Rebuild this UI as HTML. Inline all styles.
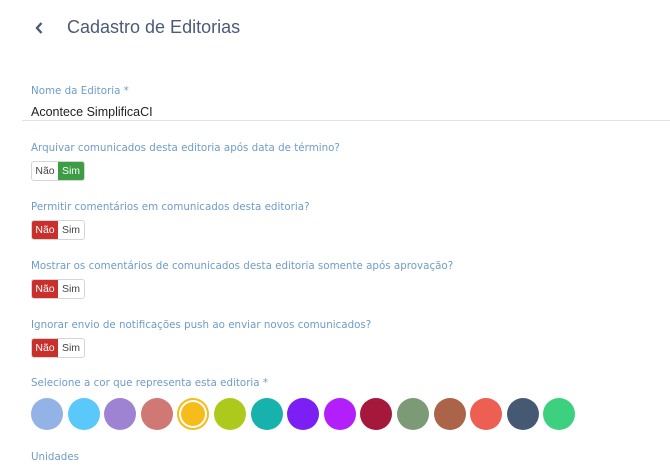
<!DOCTYPE html><html><head><style>
body{margin:0;width:670px;height:476px;background:#fff;font-family:"DejaVu Sans","Liberation Sans",sans-serif;position:relative;overflow:hidden}
.a{position:absolute;white-space:nowrap}
.t{left:67px;top:17px;font-size:18px;color:#4b5a78;font-family:"Liberation Sans",sans-serif}
.l{left:31px;font-size:10.3px;color:#6f9cc8}
.tg{position:absolute;left:31px;width:52px;height:18px;border:1px solid #d6d6d6;border-radius:3px;display:flex;font-family:"Liberation Sans",sans-serif;font-size:10.5px;overflow:hidden}
.tg span{flex:1;display:flex;align-items:center;justify-content:center;color:#444}
.tg .r{background:#c9302c;color:#fff}.tg .g{background:#3d9d44;color:#fff}
.c{position:absolute;top:398px;width:32px;height:32px;border-radius:50%}
</style></head><body>
<svg class="a" style="left:34px;top:21px" width="10" height="14" viewBox="0 0 10 14"><path d="M7.5 2 L3 7 L7.5 12" stroke="#4b5a78" stroke-width="2.4" fill="none"/></svg>
<div class="a t">Cadastro de Editorias</div>
<div class="a l" style="top:85px">Nome da Editoria *</div>
<div class="a" style="left:31px;top:105px;font-family:'Liberation Sans',sans-serif;font-size:12.5px;color:#222">Acontece SimplificaCI</div>
<div class="a" style="left:22px;top:120px;width:648px;height:1px;background:#e2e2e2"></div>
<div class="a l" style="top:142px">Arquivar comunicados desta editoria após data de término?</div>
<div class="tg" style="top:161px"><span>Não</span><span class="g">Sim</span></div>
<div class="a l" style="top:201px">Permitir comentários em comunicados desta editoria?</div>
<div class="tg" style="top:220px"><span class="r">Não</span><span>Sim</span></div>
<div class="a l" style="top:260px">Mostrar os comentários de comunicados desta editoria somente após aprovação?</div>
<div class="tg" style="top:279px"><span class="r">Não</span><span>Sim</span></div>
<div class="a l" style="top:319px">Ignorar envio de notificações push ao enviar novos comunicados?</div>
<div class="tg" style="top:338px"><span class="r">Não</span><span>Sim</span></div>
<div class="a l" style="top:377px">Selecione a cor que representa esta editoria *</div>
<div class="c" style="left:31px;background:#93b2e6"></div>
<div class="c" style="left:67.6px;background:#5bc8fb"></div>
<div class="c" style="left:104.2px;background:#9e83d2"></div>
<div class="c" style="left:140.8px;background:#d07874"></div>
<div class="c" style="left:177.4px;background:#f5bc1c;box-shadow:inset 0 0 0 2px #f5bc1c,inset 0 0 0 4px #fff"></div>
<div class="c" style="left:214px;background:#adc91b"></div>
<div class="c" style="left:250.6px;background:#18b2ac"></div>
<div class="c" style="left:287.2px;background:#7b1ff5"></div>
<div class="c" style="left:323.8px;background:#b21ffa"></div>
<div class="c" style="left:360.4px;background:#a6173c"></div>
<div class="c" style="left:397px;background:#7d9a76"></div>
<div class="c" style="left:433.6px;background:#ab6447"></div>
<div class="c" style="left:470.2px;background:#ec5f52"></div>
<div class="c" style="left:506.8px;background:#455a72"></div>
<div class="c" style="left:543.4px;background:#3dd07e"></div>
<div class="a l" style="top:451px">Unidades</div>
</body></html>
